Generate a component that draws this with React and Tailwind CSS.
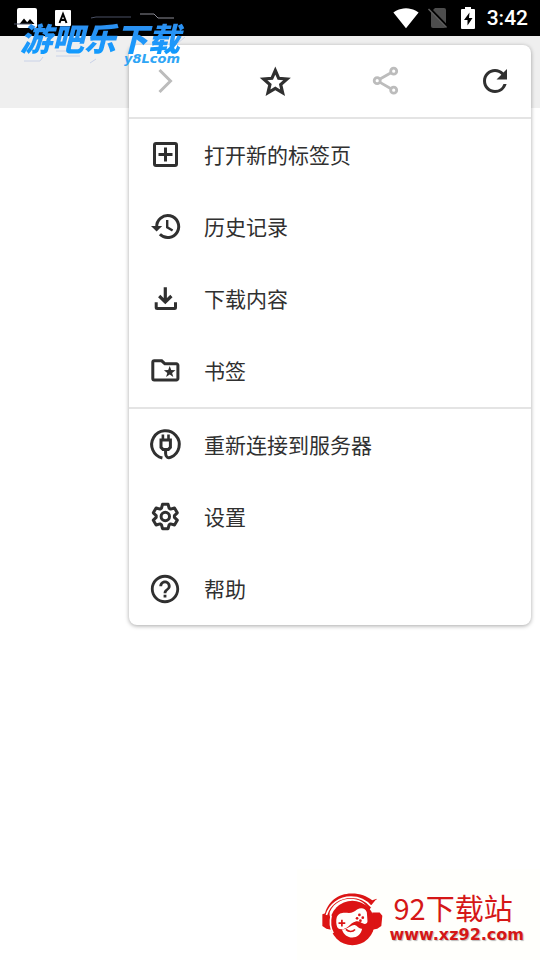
import React from 'react';
import { MdRefresh, MdHelpOutline, MdSignalWifi4Bar } from 'react-icons/md';

function Glyph({ children }) {
  return (
    <svg
      viewBox="0 0 36 36"
      className="size-9 shrink-0"
      fill="none"
      stroke="currentColor"
      strokeWidth="3"
      aria-hidden="true"
    >
      {children}
    </svg>
  );
}

const StarIcon = () => (
  <Glyph>
    <path
      d="M18.3 7.500l3.400 7.800 8.300.7-6.300 5.600 1.900 8.200-7.300-4.400-7.300 4.400 1.900-8.200-6.300-5.600 8.300-.7z"
      strokeWidth="3.200"
    />
  </Glyph>
);

const ShareIcon = () => (
  <Glyph>
    <circle cx="26.700" cy="8.200" r="3" strokeWidth="2.800" />
    <circle cx="26.700" cy="27.200" r="3" strokeWidth="2.800" />
    <circle cx="10.200" cy="17.700" r="3" strokeWidth="2.800" />
    <path d="M13 16l11-6.300M13 19.400l11 6.300" strokeWidth="2.800" />
  </Glyph>
);

const NewTabIcon = () => (
  <Glyph>
    <rect x="7.5" y="6.5" width="22" height="22" rx="1.5" />
    <path d="M11.5 17.5h14M18.5 10.5v14" />
  </Glyph>
);

const HistoryIcon = () => (
  <Glyph>
    <path d="M9.7 18A11 11 0 1 1 12.9 25.3" />
    <path d="M4 17h11.2L9.6 22.6z" fill="currentColor" stroke="none" />
    <path d="M20.2 11v7.3l5.4 3.2" strokeWidth="2.4" />
  </Glyph>
);

const DownloadIcon = () => (
  <Glyph>
    <path d="M18.3 6.2v14.3M12.2 15l6.1 6 6.1-6" strokeWidth="3.200" />
    <path d="M9.2 21.3v5.2a1 1 0 0 0 1 1h17.3a1 1 0 0 0 1-1v-5.2" />
  </Glyph>
);

const BookmarkIcon = () => (
  <Glyph>
    <path d="M7.3 7.8h7.4l3.2 3h11.500a1.5 1.5 0 0 1 1.5 1.5v13.2a1.5 1.5 0 0 1-1.5 1.5H7.3a1.5 1.5 0 0 1-1.5-1.5V9.3a1.5 1.5 0 0 1 1.5-1.5z" />
    <path
      d="M22.7 13l1.5 4.1 4.3.1-3.4 2.7 1.2 4.2-3.6-2.5-3.6 2.5 1.2-4.2-3.4-2.7 4.3-.1z"
      fill="currentColor"
      stroke="none"
    />
  </Glyph>
);

const PlugIcon = () => (
  <Glyph>
    <path d="M15.400 31A13.800 13.800 0 1 1 24 30.200C20.800 31.600 18.600 29.800 18.600 26.600V23" />
    <path d="M14 13h9.400v7.400l-2 2h-5.400l-2-2z" />
    <path d="M15.900 7.400v5M21.500 7.400v5" strokeWidth="2.600" />
  </Glyph>
);

const GearIcon = () => (
  <Glyph>
    <g transform="translate(18.300 17.500)" strokeLinejoin="round">
      <path d="M-2.8-12.2H2.8L3.800-8.300 5.300-7.400 9.200-8.500 12-3.700 9.100-.9V.9L12 3.700 9.200 8.500 5.300 7.400 3.800 8.300 2.800 12.200H-2.800L-3.800 8.300-5.300 7.400-9.200 8.500-12 3.700-9.100.9V-.9L-12-3.700-9.200-8.500-5.300-7.400-3.800-8.300z" />
      <circle r="4.200" />
    </g>
  </Glyph>
);

const pageItems = [
  { label: '打开新的标签页', icon: <NewTabIcon /> },
  { label: '历史记录', icon: <HistoryIcon /> },
  { label: '下载内容', icon: <DownloadIcon /> },
  { label: '书签', icon: <BookmarkIcon /> },
];

const appItems = [
  { label: '重新连接到服务器', icon: <PlugIcon /> },
  { label: '设置', icon: <GearIcon /> },
  { label: '帮助', icon: <MdHelpOutline className="size-9 shrink-0 p-px" /> },
];

function MenuRow({ label, icon }) {
  return (
    <li>
      <button type="button" className="flex h-[72px] w-full items-center gap-[21px] px-[18px] text-left">
        {icon}
        <span className="pb-0.5 text-[21px] leading-8">{label}</span>
      </button>
    </li>
  );
}

function StatusBar() {
  return (
    <header className="flex h-9 items-center justify-between bg-black pr-3 pl-4 text-white">
      <div className="flex items-center gap-4">
        <svg viewBox="0 0 22 22" className="size-[22px]" aria-hidden="true">
          <rect x="1" y="1" width="20" height="20" rx="2" fill="#fff" />
          <path d="M3.500 17l4.500-5.500 3.200 3.800 2.800-3.300 4.500 5z" fill="#000" />
        </svg>
        <svg viewBox="0 0 18 18" className="size-[18px]" aria-hidden="true">
          <rect x="1" y="1" width="16" height="16" rx="1" fill="#fff" />
          <path d="M5.500 14L9 5l3.500 9M6.800 11h4.400" fill="none" stroke="#000" strokeWidth="2" />
        </svg>
      </div>
      <div className="flex items-center gap-2">
        <MdSignalWifi4Bar className="size-[26px]" />
        <svg viewBox="0 0 22 22" className="size-[22px]" aria-hidden="true">
          <path d="M8 1h9a2 2 0 0 1 2 2v16a2 2 0 0 1-2 2H6a2 2 0 0 1-2-2V5z" fill="#4d4d4d" />
          <path d="M2.500 1.500l18 18.500" stroke="#000" strokeWidth="3" />
          <path d="M1.500 2l18 18.500" stroke="#606060" strokeWidth="1.500" />
        </svg>
        <svg viewBox="0 0 22 24" className="h-6 w-[22px]" aria-hidden="true">
          <path d="M8 1h6v2h3a1 1 0 0 1 1 1v18a1 1 0 0 1-1 1H5a1 1 0 0 1-1-1V4a1 1 0 0 1 1-1h3z" fill="#fff" />
          <path d="M12.500 6.500L7 14h3.500v5.500L15.500 12H12z" fill="#000" />
        </svg>
        <time className="font-[Roboto,sans-serif] text-[21px] leading-6 font-medium">3:42</time>
      </div>
    </header>
  );
}

function TopBrand() {
  return (
    <div className="pointer-events-none absolute top-[19px] left-3 flex flex-col items-end">
      <svg
        viewBox="0 0 180 52"
        className="absolute -top-[7px] left-0 h-[52px] w-[180px]"
        fill="none"
        aria-hidden="true"
      >
        <path d="M2 12h18M79 6l5-1h35" stroke="#4a5064" strokeWidth="1" />
        <path d="M128 2h14l4 4h16" stroke="#8b8b95" strokeWidth="1" />
        <path d="M12 49h16l3-4M44 44h24M78 51l6-4M44 39h12" stroke="#c9d2e8" strokeWidth="1" />
        <path d="M166 31l7-6" stroke="#c9d2e8" strokeWidth="1" />
      </svg>
      <p className="relative bg-linear-to-b from-[#2f8ff0] to-[#0c9bff] bg-clip-text px-2 text-[32px] leading-9 font-black text-transparent italic">
        游吧乐下载
      </p>
      <p className="pr-2 font-['DejaVu_Sans',sans-serif] text-[13px] leading-2 font-bold text-[#2fa5f5] italic">
        y8Lcom
      </p>
    </div>
  );
}

function SiteBrand() {
  return (
    <footer className="absolute right-0 bottom-0 flex items-start gap-1.5 bg-[#fffffc] pt-5 pr-4 pb-3.5 pl-6">
      <svg viewBox="92 92 184 160" className="mt-[3px] h-[54px] w-[62px]" aria-hidden="true">
        <g fill="#dc1414">
          <path d="M103 160C110 120 145 95 184 96c24 0 44 8 60 20l14-4-9 13-14 20c-12-22-32-33-54-33-32 0-59 18-66 50z" />
          <path d="M96 158l20-7 10 54-18-4-12-8zM244 153l22 0 8 9-3 31-12 8-19 4z" />
        </g>
        <circle cx="185" cy="184" r="66" fill="#dc1414" />
        <path d="M108 160c10-33 40-53 73-53 24 0 46 11 60 28l15-18" fill="none" stroke="#fffffc" strokeWidth="5" />
        <path d="M122 162c-4 18-3 36 6 52" fill="none" stroke="#fffffc" strokeWidth="5" />
        <path
          d="M139 166c6-16 25-13 36-12 9 0 16-4 24-10 13-8 25-3 29 8l2 27c-1 10-12 9-20 3-6-3-10-4-17-2-8 2-13 8-20 14-11 9-27 13-33 2-3-9-4-20-1-30z"
          fill="#fffffc"
        />
        <path d="M144 184h20M154 174v20" stroke="#dc1414" strokeWidth="5" />
        <g fill="#dc1414">
          <circle cx="206" cy="160" r="4" />
          <circle cx="216" cy="168" r="4" />
          <circle cx="199" cy="170" r="4" />
          <circle cx="209" cy="177" r="4" />
        </g>
        <path d="M154 203c5 15 17 24 31 24s26-9 29-26c-8 2-14-9-22-11-12-1-22 14-38 13z" fill="#fffffc" />
        <path d="M166 203c8 8 20 8 27 0" fill="none" stroke="#dc1414" strokeWidth="5" />
      </svg>
      <div className="text-[#d51717]">
        <p className="pl-1 text-[29px] leading-9">92下载站</p>
        <p className="font-['DejaVu_Sans',sans-serif] text-[16px] leading-5 font-bold text-shadow-[1px_1px_1px_#bbbbbb]">
          www.xz92.com
        </p>
      </div>
    </footer>
  );
}

export default function App() {
  return (
    <div className="relative min-h-screen bg-white font-['Noto_Sans_CJK_SC',sans-serif] text-[#303030]">
      <StatusBar />
      <div className="h-[72px] bg-[#efefef]" />

      <nav className="absolute top-[45px] right-[9px] w-[402px] rounded-lg bg-white shadow-[0_1px_4px_rgba(0,0,0,0.35)]">
        <div className="flex h-[74px] items-center justify-between border-b-2 border-[#e4e4e4] px-[18px]">
          <button type="button" aria-label="前进" disabled className="text-[#bcbcbc]">
            <Glyph>
              <path d="M12.500 7L23.500 18 12.500 29" />
            </Glyph>
          </button>
          <button type="button" aria-label="添加书签">
            <StarIcon />
          </button>
          <button type="button" aria-label="分享" disabled className="text-[#bcbcbc]">
            <ShareIcon />
          </button>
          <button type="button" aria-label="刷新">
            <MdRefresh className="size-9" />
          </button>
        </div>
        <ul className="border-b-2 border-[#e4e4e4]">
          {pageItems.map((item) => (
            <MenuRow key={item.label} {...item} />
          ))}
        </ul>
        <ul>
          {appItems.map((item) => (
            <MenuRow key={item.label} {...item} />
          ))}
        </ul>
      </nav>

      <TopBrand />
      <SiteBrand />
    </div>
  );
}
